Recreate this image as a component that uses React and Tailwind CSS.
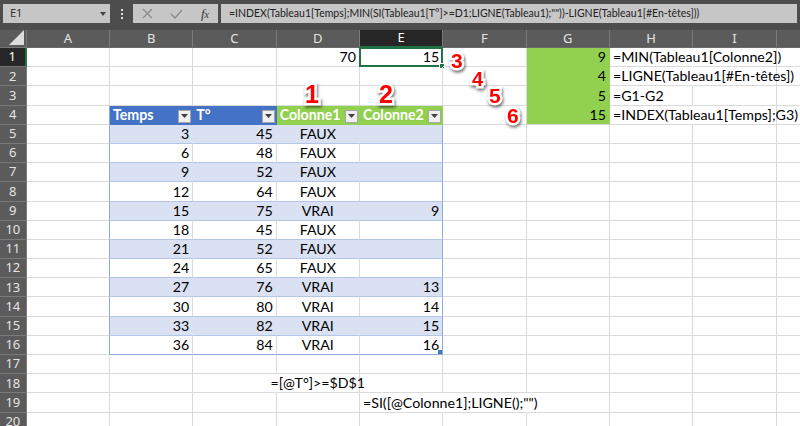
import React from "react";

const COLS = ["A", "B", "C", "D", "E", "F", "G", "H", "I", "J"];
const ROWS = Array.from({ length: 20 }, (_, i) => i + 1);

const table = [
  [3, 45, "FAUX", ""],
  [6, 48, "FAUX", ""],
  [9, 52, "FAUX", ""],
  [12, 64, "FAUX", ""],
  [15, 75, "VRAI", 9],
  [18, 45, "FAUX", ""],
  [21, 52, "FAUX", ""],
  [24, 65, "FAUX", ""],
  [27, 76, "VRAI", 13],
  [30, 80, "VRAI", 14],
  [33, 82, "VRAI", 15],
  [36, 84, "VRAI", 16],
];

const side = {
  1: ["9", "=MIN(Tableau1[Colonne2])"],
  2: ["4", "=LIGNE(Tableau1[#En-têtes])"],
  3: ["5", "=G1-G2"],
  4: ["15", "=INDEX(Tableau1[Temps];G3)"],
};

const FilterBtn = () => (
  <div className="absolute right-[1px] bottom-[1px] w-[13px] h-[13px] bg-[#efefef] border border-[#a6a6a6] flex items-center justify-center">
    <svg width="7" height="4" viewBox="0 0 7 4">
      <path d="M0 0h7L3.5 4z" fill="#404040" />
    </svg>
  </div>
);

// one cell of the sheet, colours picked by where it sits
function Cell({ r, c }) {
  let text = "";
  let align = "justify-end";
  let extra = "";
  let bg = "";
  let rb = "border-r-[#dadada]";
  let bb = "border-b-[#dadada]";
  let overlay = null;

  const inTable = r >= 4 && r <= 16 && c >= 1 && c <= 4;

  if (c === 0 && r >= 4 && r <= 16) rb = "border-r-[#8ea9db]";

  if (r === 1 && c === 3) text = "70";
  if (r === 1 && c === 4) {
    text = "15";
    overlay = (
      <div className="absolute left-[-1px] top-[-1px] right-[-1px] bottom-[-1px] border-2 border-[#217346] pointer-events-none">
        <div className="absolute right-[-4px] bottom-[-4px] w-[6px] h-[6px] bg-[#217346] border border-white" />
      </div>
    );
  }

  if (side[r] && c === 6) {
    text = side[r][0];
    bg = "bg-[#92d050]";
    rb = "border-r-[#92d050]";
    bb = r === 4 ? "border-b-[#dadada]" : "border-b-[#92d050]";
  }
  if (side[r] && c === 7) {
    text = side[r][1];
    align = "justify-start";
    if (r !== 3) rb = "border-r-white";
  }

  if (inTable && r === 4) {
    const blue = c <= 2;
    text = ["", "Temps", "T°", "Colonne1", "Colonne2"][c];
    align = "justify-start";
    extra = "text-white font-bold";
    bg = blue ? "bg-[#4472c4]" : "bg-[#92d050]";
    rb = blue ? "border-r-[#4472c4]" : "border-r-[#92d050]";
    bb = blue ? "border-b-[#4472c4]" : "border-b-[#92d050]";
    overlay = <FilterBtn />;
  }
  if (inTable && r > 4) {
    const row = table[r - 5];
    const band = r % 2 === 1;
    text = String(row[c - 1]);
    if (c === 3) align = "justify-center";
    bg = band ? "bg-[#d9e1f2]" : "bg-white";
    rb = c === 4 ? "border-r-[#8ea9db]" : band ? "border-r-[#d9e1f2]" : "border-r-[#dadada]";
    bb = r === 16 ? "border-b-[#8ea9db]" : "border-b-[#b4c6e7]";
    if (r === 16 && c === 4)
      overlay = <div className="absolute right-0 bottom-0 w-[4px] h-[4px] bg-[#4472c4]" />;
  }

  if (r === 18 && c === 2) rb = "border-r-white";
  if (r === 18 && c === 3) {
    text = "=[@T°]>=$D$1";
    align = "justify-center";
  }
  if (r === 19 && c === 4) {
    text = '=SI([@Colonne1];LIGNE();"")';
    align = "justify-start";
    rb = "border-r-white";
  }
  if (r === 19 && c === 5) rb = "border-r-white";

  return (
    <div className={`relative flex items-end pb-[1px] px-[3px] whitespace-nowrap border-r border-b leading-[16px] ${align} ${bg} ${rb} ${bb} ${extra}`}>
      {text && <span className="relative z-10">{text}</span>}
      {overlay}
    </div>
  );
}

const Mark = ({ n, cls }) => (
  <div
    className={`absolute z-30 leading-none font-bold text-[#ff0000] font-['Liberation_Sans',sans-serif] [paint-order:stroke_fill] [-webkit-text-stroke:5px_#ffffff] drop-shadow-[1px_2px_1.5px_rgba(0,0,0,0.55)] ${cls}`}
  >
    {n}
  </div>
);

export default function App() {
  return (
    <div className="relative w-[800px] h-[426px] overflow-hidden bg-white font-['Lato',sans-serif]">
      {/* formula bar */}
      <div className="h-[30px] bg-[#4d4d4d] flex items-start pt-[4px] font-['Noto_Sans',sans-serif] text-[11px]">
        <div className="ml-[3px] w-[107px] h-[19px] bg-[#c6c6c6] flex items-center justify-between pl-[7px] pr-[4px] text-[#333]">
          <span>E1</span>
          <svg width="6" height="4" viewBox="0 0 6 4">
            <path d="M0 0h6L3 4z" fill="#444" />
          </svg>
        </div>
        <div className="w-[23px] h-[19px] flex flex-col items-center justify-center gap-[2px]">
          <div className="w-[2px] h-[2px] bg-[#e0e0e0]" />
          <div className="w-[2px] h-[2px] bg-[#e0e0e0]" />
          <div className="w-[2px] h-[2px] bg-[#e0e0e0]" />
        </div>
        <div className="w-[85px] h-[19px] bg-[#c6c6c6] flex items-center pl-[9px] pr-[9px] justify-between">
          <svg width="11" height="11" viewBox="0 0 11 11">
            <path d="M1 1l9 9M10 1l-9 9" stroke="#8c8c8c" strokeWidth="1.3" />
          </svg>
          <svg width="13" height="10" viewBox="0 0 13 10">
            <path d="M1 5l4 4 7-8" stroke="#8c8c8c" strokeWidth="1.4" fill="none" />
          </svg>
          <span className="font-['Liberation_Serif',serif] italic text-[13px] text-[#333] leading-none">
            f<span className="text-[10px]">x</span>
          </span>
        </div>
        <div className="ml-[3px] w-[576px] h-[19px] bg-[#c6c6c6] flex items-center pl-[8px] text-[#222] whitespace-nowrap overflow-hidden font-['Lato',sans-serif] text-[10.5px]">
          =INDEX(Tableau1[Temps];MIN(SI(Tableau1[T°]&gt;=D1;LIGNE(Tableau1);""))-LIGNE(Tableau1[#En-têtes]))
        </div>
      </div>

      {/* sheet */}
      <div className="grid grid-cols-[26.67px_repeat(10,83.33px)] grid-rows-[18px_repeat(20,19.2px)] text-[14.2px] text-black">
        <div className="relative bg-[#5b5b5b] border-r border-b border-[#777]">
          <svg className="absolute right-[2px] bottom-[2px]" width="15" height="15" viewBox="0 0 15 15">
            <path d="M15 0V15H0z" fill="#dcdcdc" />
          </svg>
        </div>
        {COLS.map((col, i) => (
          <div
            key={col}
            className={
              i === 4
                ? "flex items-center justify-center bg-[#262626] border-r border-r-[#777] border-b-2 border-b-[#217346] text-white font-['Noto_Sans',sans-serif] text-[13px]"
                : "flex items-center justify-center bg-[#5b5b5b] border-r border-r-[#7a7a7a] border-b border-b-[#6a6a6a] text-[#e4e4e4] font-['Noto_Sans',sans-serif] text-[13px]"
            }
          >
            {col === "J" ? "" : col}
          </div>
        ))}
        {ROWS.map((r) => (
          <React.Fragment key={r}>
            <div
              className={
                r === 1
                  ? "flex items-center justify-center bg-[#262626] border-r-2 border-r-[#217346] border-b border-b-[#777] text-white font-['Noto_Sans',sans-serif] text-[13px]"
                  : "flex items-center justify-center bg-[#5b5b5b] border-r border-r-[#7a7a7a] border-b border-b-[#7a7a7a] text-[#e4e4e4] font-['Noto_Sans',sans-serif] text-[13px]"
              }
            >
              {r}
            </div>
            {COLS.map((col, c) => (
              <Cell key={col} r={r} c={c} />
            ))}
          </React.Fragment>
        ))}
      </div>

      {/* hand-drawn numbers */}
      <Mark n="1" cls="text-[25px] left-[305px] top-[82px]" />
      <Mark n="2" cls="text-[25px] left-[379px] top-[82px]" />
      <Mark n="3" cls="text-[21px] left-[451px] top-[50px]" />
      <Mark n="4" cls="text-[20px] left-[472px] top-[69px]" />
      <Mark n="5" cls="text-[21px] left-[489px] top-[85px]" />
      <Mark n="6" cls="text-[21px] left-[507px] top-[105px]" />
    </div>
  );
}
